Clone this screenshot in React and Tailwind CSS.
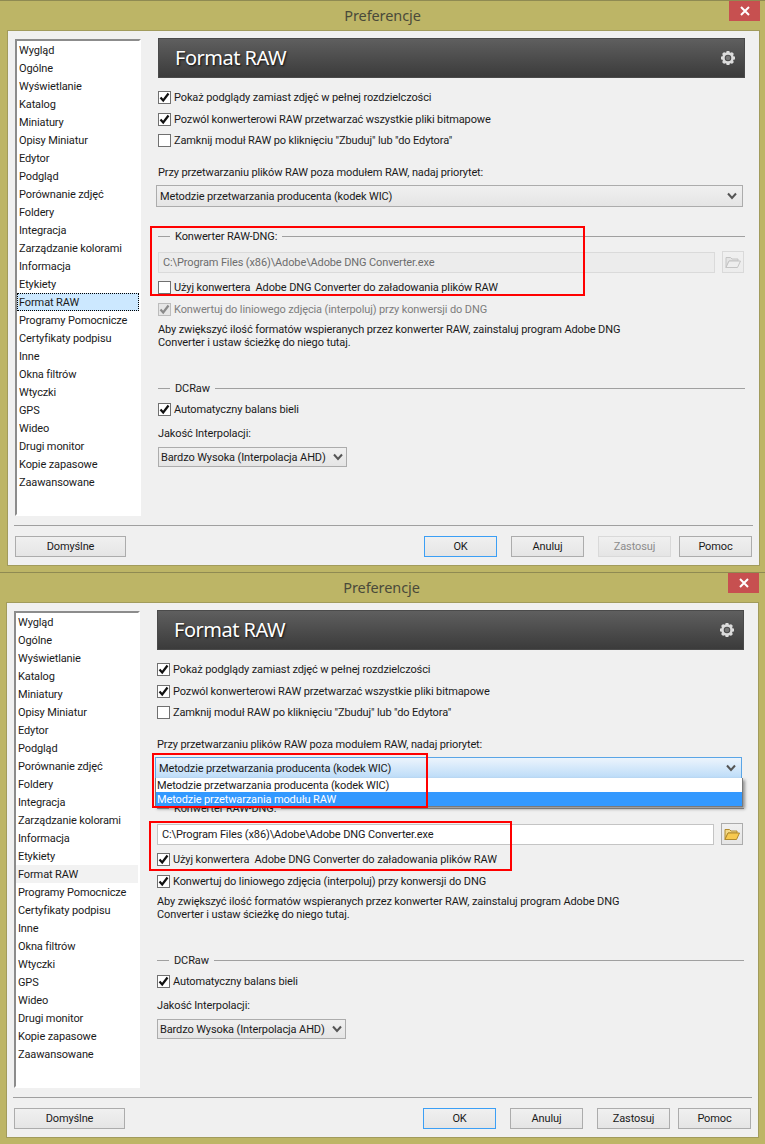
import React from "react";

const menuItems = [
  "Wygląd", "Ogólne", "Wyświetlanie", "Katalog", "Miniatury", "Opisy Miniatur", "Edytor", "Podgląd",
  "Porównanie zdjęć", "Foldery", "Integracja", "Zarządzanie kolorami", "Informacja", "Etykiety", "Format RAW",
  "Programy Pomocnicze", "Certyfikaty podpisu", "Inne", "Okna filtrów", "Wtyczki", "GPS", "Wideo",
  "Drugi monitor", "Kopie zapasowe", "Zaawansowane",
];

const Chevron = () => (
  <svg width="10" height="8" viewBox="0 0 10 8" fill="none" stroke="#555" strokeWidth="2">
    <path d="M1 1.5 L5 6 L9 1.5" />
  </svg>
);

const Gear = () => (
  <svg width="16" height="16" viewBox="0 0 16 16">
    <g fill="#dcdcdc">
      {[0, 45, 90, 135, 180, 225, 270, 315].map((deg) => (
        <rect key={deg} x="6.5" y="1" width="3" height="3" transform={`rotate(${deg} 8 8)`} />
      ))}
    </g>
    <circle cx="8" cy="8" r="4.6" fill="none" stroke="#dcdcdc" strokeWidth="2.6" />
    <circle cx="8" cy="8" r="2.2" fill="#777" />
  </svg>
);

const Folder = ({ disabled }) => (
  <svg width="16" height="14" viewBox="0 0 16 14">
    <path d="M1 2.5 H5.5 L7 4 H13 V6 H4 L1 12.5 Z" fill={disabled ? "#e4e4e4" : "#f3d98a"} stroke={disabled ? "#c4c4c4" : "#b08a2e"} />
    <path d="M1 12.5 L4 6 H15.5 L12.5 12.5 Z" fill={disabled ? "#eeeeee" : "#f7c94f"} stroke={disabled ? "#c4c4c4" : "#b08a2e"} />
  </svg>
);

const Checkbox = ({ checked, disabled }) => (
  <span className={`flex w-[13px] h-[13px] shrink-0 items-center justify-center border ${disabled ? "bg-[#e6e6e6] border-[#bcbcbc]" : "bg-white border-[#707070]"}`}>
    {checked && (
      <svg width="11" height="11" viewBox="0 0 11 11" fill="none" stroke={disabled ? "#8a8a8a" : "#111"} strokeWidth="2.2">
        <path d="M1.5 5.5 L4.2 8.5 L9.5 1.5" />
      </svg>
    )}
  </span>
);

const CheckRow = ({ label, checked, disabled, className = "h-[22px]" }) => (
  <div className={`flex items-center gap-[3px] ${className}`}>
    <Checkbox checked={checked} disabled={disabled} />
    <span className={`whitespace-pre ${disabled ? "text-[#7d7d7d]" : ""}`}>{label}</span>
  </div>
);

const GroupTitle = ({ label, className }) => (
  <div className={`flex items-center h-4 ${className}`}>
    <div className="w-[12px] h-px bg-[#a0a0a0]" />
    <span className="px-[5px]">{label}</span>
    <div className="flex-1 h-px bg-[#a0a0a0]" />
  </div>
);

const Button = ({ label, focused, disabled, className = "w-[73px]" }) => (
  <div
    className={`flex h-[21px] items-center justify-center border bg-gradient-to-b from-[#f0f0f0] to-[#e5e5e5] ${className} ${
      focused ? "border-[#3c9ff5]" : disabled ? "border-[#d9d9d9] text-[#8c8c8c]" : "border-[#acacac]"
    }`}
  >
    {label}
  </div>
);

const RedBox = ({ className }) => (
  <div className={`absolute border-2 border-[#ff0000] ${className}`} />
);

const PrefWindow = ({ second }) => (
  <div className="relative h-[572px] bg-[#bdb566] border-t border-[#8f8a52] font-['Roboto',sans-serif] text-[11px] leading-[13px] text-[#1a1a1a] tracking-[-0.12px]">
    {/* Title bar */}
    <div className={`flex h-[29px] items-center justify-center font-['Noto_Sans',sans-serif] text-[14.5px] text-[#4a4a3a] tracking-[-0.1px] ${second ? "pr-[2px]" : ""}`}>
      Preferencje
    </div>
    <div className={`absolute top-0 flex h-5 w-[31px] items-center justify-center bg-[#c75050] ${second ? "right-[6px]" : "right-[5px]"}`}>
      <svg width="10" height="10" viewBox="0 0 10 10" stroke="#fff" strokeWidth="2">
        <path d="M1 1 L9 9 M9 1 L1 9" />
      </svg>
    </div>

    {/* Client area */}
    <div className={`h-[536px] border border-[#a19b5c] bg-[#f0f0f0] ${second ? "ml-[6px] mr-[6px]" : "ml-[7px] mr-[5px]"}`}>
      <div className="flex pt-[7px] pl-[7px] h-[494px]">
        <div className="mt-px h-[477px] w-[126px] shrink-0 border-t-2 border-l-2 border-b-2 border-r-2 border-t-[#8c8c8c] border-l-[#8c8c8c] border-b-white border-r-white bg-white">
          {menuItems.map((item) => (
            <div
              key={item}
              className={`flex h-[18px] items-center pl-[2px] ${
                item === "Format RAW"
                  ? second
                    ? "bg-[#f2f2f2]"
                    : "bg-[#cce8ff] outline-1 -outline-offset-1 outline-dotted outline-black"
                  : ""
              }`}
            >
              {item}
            </div>
          ))}
        </div>

        <div className="ml-[17px] w-[587px]">
          <div className="flex h-10 items-center justify-between border border-[#4a4a4a] bg-gradient-to-b from-[#5f5f5f] to-[#3b3b3b] pl-4 pr-[8px]">
            <span className="font-['Noto_Sans',sans-serif] text-[20px] leading-6 text-white tracking-[-0.5px] [text-shadow:1px_1px_2px_#111]">Format RAW</span>
            <Gear />
          </div>

          <div className="mt-2">
            <CheckRow checked label="Pokaż podglądy zamiast zdjęć w pełnej rozdzielczości" />
            <CheckRow checked label="Pozwól konwerterowi RAW przetwarzać wszystkie pliki bitmapowe" />
            <CheckRow className="h-[21px]" label={'Zamknij moduł RAW po kliknięciu "Zbuduj" lub "do Edytora"'} />
          </div>

          <div className="mt-[14px] h-4 leading-4">Przy przetwarzaniu plików RAW poza modułem RAW, nadaj priorytet:</div>
          <div
            className={`-ml-[2px] mt-1 flex h-[22px] w-[587px] items-center justify-between border pl-[3px] pr-[5px] bg-gradient-to-b ${
              second ? "border-[#5aa5e6] from-[#ecf4fc] to-[#bcdcf8]" : "border-[#acacac] from-[#f0f0f0] to-[#e5e5e5]"
            }`}
          >
            <span>Metodzie przetwarzania producenta (kodek WIC)</span>
            <Chevron />
          </div>

          <GroupTitle className="mt-[21px]" label="Konwerter RAW-DNG:" />

          <div className="mt-2 flex items-start">
            <div
              className={`flex h-[21px] w-[557px] items-center border pl-1 ${
                second ? "border-[#c4c4c4] bg-white" : "border-[#dadada] bg-[#ececec] text-[#6d6d6d]"
              }`}
            >
              {"C:\\Program Files (x86)\\Adobe\\Adobe DNG Converter.exe"}
            </div>
            <div
              className={`ml-[7px] -mt-px flex h-[22px] w-[22px] items-center justify-center border bg-gradient-to-b ${
                second ? "border-[#acacac] from-[#f0f0f0] to-[#e5e5e5]" : "border-[#d9d9d9] from-[#f0f0f0] to-[#ececec]"
              }`}
            >
              <Folder disabled={!second} />
            </div>
          </div>

          <CheckRow className="mt-1 h-5" checked={second} label="Użyj konwertera  Adobe DNG Converter do załadowania plików RAW" />
          <CheckRow className="mt-[2px] h-5" checked disabled={!second} label="Konwertuj do liniowego zdjęcia (interpoluj) przy konwersji do DNG" />

          <p className="mt-1 w-[480px]">
            Aby zwiększyć ilość formatów wspieranych przez konwerter RAW, zainstaluj program Adobe DNG Converter i ustaw ścieżkę do niego tutaj.
          </p>

          <GroupTitle className="mt-[31px]" label="DCRaw" />
          <CheckRow className="mt-[3px] h-5" checked label="Automatyczny balans bieli" />
          <div className="mt-[7px] h-4 leading-4">Jakość Interpolacji:</div>
          <div className="mt-[5px] flex h-[20px] w-[189px] items-center border border-[#acacac] bg-gradient-to-b from-[#f0f0f0] to-[#e5e5e5] pl-[2px]">
            <span className="w-[170px] whitespace-nowrap">Bardzo Wysoka (Interpolacja AHD)</span>
            <span className="ml-[2px]"><Chevron /></span>
          </div>
        </div>
      </div>

      {/* Bottom buttons */}
      <div className="mx-[6px] border-t border-[#a0a0a0] pt-[10px] flex pl-px pr-0">
        <Button label="Domyślne" className="w-[111px]" />
        <div className="ml-[298px] flex">
          <Button label="OK" focused />
          <Button label="Anuluj" className="ml-[14px] w-[73px]" />
          <Button label="Zastosuj" disabled={!second} className="ml-[14px] w-[73px]" />
          <Button label="Pomoc" className="ml-2 w-[73px]" />
        </div>
      </div>
    </div>

    {/* Open dropdown and highlight rectangles lie over the window */}
    {second && (
      <div className="absolute left-[155px] top-[205px] w-[588px] border border-t-0 border-[#7a7a7a] bg-white shadow-[2px_2px_3px_rgba(0,0,0,0.4)]">
        <div className="flex h-[14px] items-center pl-[1px]">Metodzie przetwarzania producenta (kodek WIC)</div>
        <div className="flex h-[14px] items-center bg-[#3399ff] pl-[1px] text-white">Metodzie przetwarzania modułu RAW</div>
      </div>
    )}
    {second ? (
      <>
        <RedBox className="left-[152px] top-[180px] h-[55px] w-[276px]" />
        <RedBox className="left-[149px] top-[248px] h-[50px] w-[363px]" />
      </>
    ) : (
      <RedBox className="left-[150px] top-[225px] h-[70px] w-[435px]" />
    )}
  </div>
);

const App = () => {
  return (
    <div className="w-[765px] h-[1144px] overflow-hidden">
      <PrefWindow />
      <PrefWindow second />
    </div>
  );
};

export default App;
